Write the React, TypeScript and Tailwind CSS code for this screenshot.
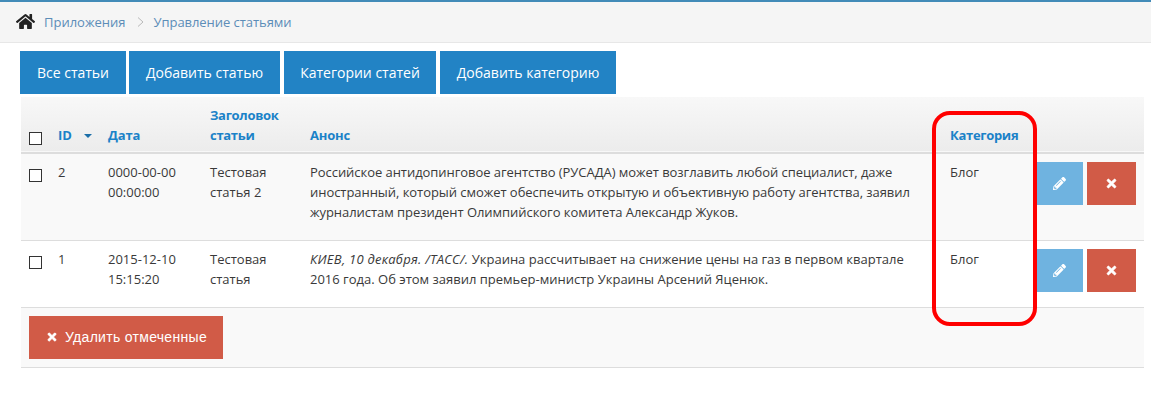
import { FaHome, FaPencilAlt, FaTimes } from 'react-icons/fa';

const rows = [
  {
    id: '2',
    date: ['0000-00-00', '00:00:00'],
    title: ['Тестовая', 'статья 2'],
    bg: 'bg-[#f9f9f9]',
    h: 'h-[87px]',
    text: (
      <span className="tracking-[-0.05px]">
        Российское антидопинговое агентство (РУСАДА) может возглавить любой специалист, даже
        <br />
        иностранный, который сможет обеспечить открытую и объективную работу агентства, заявил
        <br />
        журналистам президент Олимпийского комитета Александр Жуков.
      </span>
    ),
  },
  {
    id: '1',
    date: ['2015-12-10', '15:15:20'],
    title: ['Тестовая', 'статья'],
    bg: 'bg-white',
    h: 'h-[67px]',
    text: (
      <>
        <em className="tracking-[0.25px]">КИЕВ, 10 декабря. /ТАСС/.</em> Украина рассчитывает на снижение цены на газ в первом квартале
        <br />
        2016 года. Об этом заявил премьер-министр Украины Арсений Яценюк.
      </>
    ),
  },
];

const tabs = [
  { label: 'Все статьи', w: 'w-[106px]', gap: 'ml-0' },
  { label: 'Добавить статью', w: 'w-[151px]', gap: 'ml-[3px]' },
  { label: 'Категории статей', w: 'w-[152px]', gap: 'ml-[4px]' },
  { label: 'Добавить категорию', w: 'w-[176px]', gap: 'ml-[4px]' },
];

function Check() {
  return <span className="block w-[13px] h-[13px] border border-[#333] bg-white" />;
}

export default function App() {
  return (
    <div className="relative w-[1151px] h-[404px] overflow-hidden bg-white text-[13px] leading-[20px] text-[#393939] font-['Open_Sans',sans-serif]">
      <div className="h-[43px] border-t-2 border-b border-t-[#428bb8] border-b-[#e7e7e7] bg-[#f5f5f5] flex items-center pl-[16px] pb-px">
        <FaHome size={19} className="text-[#222]" />
        <span className="ml-[9px] text-[#5c8db8]">Приложения</span>
        <svg width="7" height="10" viewBox="0 0 7 10" className="ml-[11px]">
          <path d="M1 0.5 L6 5 L1 9.5" fill="none" stroke="#b8b8b8" strokeWidth="1" />
        </svg>
        <span className="ml-[10px] text-[#5c8db8] tracking-[-0.05px]">Управление статьями</span>
      </div>

      <div className="flex pl-5 mt-2">
        {tabs.map((tab) => (
          <div
            key={tab.label}
            className={`${tab.w} ${tab.gap} h-[43px] bg-[#2283c5] text-white text-[14px] flex items-center justify-center`}
          >
            {tab.label}
          </div>
        ))}
      </div>

      <table className="ml-[21px] mt-[3px] w-[1123px] table-fixed border-collapse">
        <colgroup>
          <col className="w-[29px]" />
          <col className="w-[50px]" />
          <col className="w-[102px]" />
          <col className="w-[100px]" />
          <col className="w-[640px]" />
          <col className="w-[86px]" />
          <col />
        </colgroup>
        <thead>
          <tr className="h-[56px] bg-gradient-to-b from-[#f8f8f8] to-[#ececec] border-b-2 border-[#dddddd] font-bold text-[#1b82c8]">
            <th className="pl-2 pb-[7px] align-bottom">
              <Check />
            </th>
            <th className="pl-2 pb-[7px] align-bottom text-left font-bold">
              <span className="flex items-center h-5">
                ID
                <span className="ml-[12px] mt-px w-0 h-0 border-x-[4px] border-t-[4px] border-x-transparent border-t-[#1b6ea8]" />
              </span>
            </th>
            <th className="pl-2 pb-[7px] align-bottom text-left font-bold tracking-[-0.2px]">Дата</th>
            <th className="pl-2 pb-[7px] align-bottom text-left font-bold tracking-[-0.3px]">
              Заголовок
              <br />
              статьи
            </th>
            <th className="pl-2 pb-[7px] align-bottom text-left font-bold tracking-[-0.2px]">Анонс</th>
            <th className="pl-2 pb-[7px] align-bottom text-left font-bold tracking-[-0.3px]">Категория</th>
            <th />
          </tr>
        </thead>
        <tbody>
          {rows.map((row) => (
            <tr key={row.id} className={`${row.bg} ${row.h} border-b border-[#dddddd]`}>
              <td className="pl-2 pt-[15px] align-top">
                <Check />
              </td>
              <td className="pl-2 pt-2 align-top">{row.id}</td>
              <td className="pl-2 pt-2 align-top">
                {row.date[0]}
                <br />
                {row.date[1]}
              </td>
              <td className="pl-2 pt-2 align-top">
                {row.title[0]}
                <br />
                {row.title[1]}
              </td>
              <td className="pl-2 pt-2 align-top whitespace-nowrap">{row.text}</td>
              <td className="pl-2 pt-2 align-top">Блог</td>
              <td className="pl-2 pt-2 align-top">
                <div className="flex gap-1">
                  <span className="w-[47px] h-[43px] bg-[#6fb3e0] flex items-center justify-center">
                    <FaPencilAlt size={13} className="text-white" />
                  </span>
                  <span className="w-[49px] h-[43px] bg-[#d15b47] flex items-center justify-center">
                    <FaTimes size={13} className="text-white stroke-white stroke-[25px]" />
                  </span>
                </div>
              </td>
            </tr>
          ))}
          <tr className="h-[60px] bg-[#f9f9f9] border-b border-[#dddddd]">
            <td colSpan={7} className="pl-2 align-middle">
              <div className="w-[194px] h-[43px] bg-[#d15b47] text-white text-[14px] tracking-[0.3px] font-['Liberation_Sans',sans-serif] flex items-center pl-[17px] gap-[7px]">
                <FaTimes size={12} className="text-white stroke-white stroke-[25px]" />
                Удалить отмеченные
              </div>
            </td>
          </tr>
        </tbody>
      </table>

      {/* hand-drawn red marker around the category column */}
      <div className="absolute left-[932px] top-[111px] w-[105px] h-[215px] border-[4px] border-[#ff0000] rounded-[18px] pointer-events-none" />
    </div>
  );
}
